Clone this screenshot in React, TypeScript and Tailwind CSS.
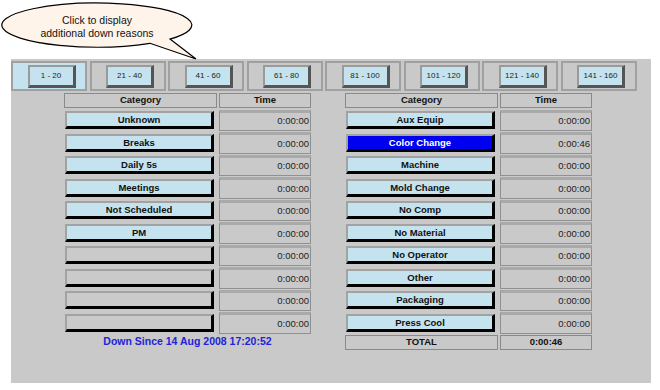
import React from "react";

const tabs = ["1 - 20", "21 - 40", "41 - 60", "61 - 80", "81 - 100", "101 - 120", "121 - 140", "141 - 160"];
const left = ["Unknown", "Breaks", "Daily 5s", "Meetings", "Not Scheduled", "PM", "", "", "", ""];
const right = ["Aux Equip", "Color Change", "Machine", "Mold Change", "No Comp", "No Material", "No Operator", "Other", "Packaging", "Press Cool"];

function Row({ label, time, selected }: { label: string; time: string; selected?: boolean }) {
  const bg = selected ? "bg-[#0000f0] text-white" : label ? "bg-[#c5e3ee] text-[#111]" : "bg-[#cacaca]";
  return (
    <div className="flex h-[22.5px] items-center gap-[2px]">
      <div className="w-[153px] flex items-center">
        <div
          className={`ml-[1px] w-[149px] h-[18px] flex items-center justify-center font-bold text-[9.5px] border-t-2 border-l-2 border-r-[3px] border-b-[3px] border-t-[#a2a2a2] border-l-[#a2a2a2] border-r-black border-b-black pt-[1px] ${bg}`}
        >
          {label}
        </div>
      </div>
      <div className="w-[92px] h-[21.5px] border border-[#909090] border-t-[3px] border-t-[#a9a9a9] bg-[#c9c9c9] flex items-center justify-end pr-[1px] text-[9.5px] text-[#222]">
        {time}
      </div>
    </div>
  );
}

function Header() {
  return (
    <div className="flex h-[15px] gap-[2px] mb-[1px]">
      <div className="w-[153px] border border-[#8a8a8a] bg-[#c9c9c9] flex items-center justify-center font-bold text-[9.5px] text-[#111]">Category</div>
      <div className="w-[92px] border border-[#8a8a8a] bg-[#c9c9c9] flex items-center justify-center font-bold text-[9.5px] text-[#111]">Time</div>
    </div>
  );
}

export default function App() {
  return (
    <div className="relative w-[660px] h-[390px] bg-white overflow-hidden" style={{ fontFamily: '"Liberation Sans", Arial, sans-serif' }}>
      <div className="ml-[11px] mt-[59px] w-[640px] h-[324px] bg-[#c9c9c9] flex flex-col">
        <div className="flex gap-[2.5px] pt-[2px] h-[32px]">
          {tabs.map((t, i) => (
            <div
              key={t}
              className={`w-[76px] h-[30px] border-2 border-[#a0a0a0] flex items-center justify-center pl-[5px] ${i === 0 ? "bg-[#c5e3ee]" : "bg-[#c9c9c9]"}`}
            >
              <div className="w-[48px] h-[23px] bg-[#c5e3ee] border-t-2 border-l-2 border-r-[3px] border-b-[3px] border-t-[#9a9a9a] border-l-[#9a9a9a] border-r-[#555] border-b-[#555] flex items-center justify-center text-[8px] text-[#222]">
                {t}
              </div>
            </div>
          ))}
        </div>
        <div className="flex mt-[2px] gap-[34px] pl-[53px]">
          <div className="flex flex-col w-[247px]">
            <Header />
            {left.map((l, i) => (
              <Row key={i} label={l} time="0:00:00" />
            ))}
            <div className="h-[16px] flex items-center justify-center font-bold text-[10.5px] text-[#2222d8]">
              Down Since 14 Aug 2008 17:20:52
            </div>
          </div>
          <div className="flex flex-col w-[247px]">
            <Header />
            {right.map((l, i) => (
              <Row key={i} label={l} time={l === "Color Change" ? "0:00:46" : "0:00:00"} selected={l === "Color Change"} />
            ))}
            <div className="flex h-[15px] gap-[2px] mt-[1px]">
              <div className="w-[153px] border border-[#8a8a8a] bg-[#c9c9c9] flex items-center justify-center font-bold text-[9.5px] text-[#111]">TOTAL</div>
              <div className="w-[92px] border border-[#8a8a8a] bg-[#c9c9c9] flex items-center justify-center font-bold text-[9.5px] text-[#111]">0:00:46</div>
            </div>
          </div>
        </div>
      </div>
      <div className="absolute left-0 top-0 w-[220px] h-[62px]">
        <svg width="220" height="62" viewBox="0 0 220 62" className="absolute left-0 top-0">
          <path d="M150,43.3 A95,22 0 1,1 170,39.1 L196,59 Z" fill="#fff4ea" stroke="#000" strokeWidth="1.2" />
        </svg>
        <div className="absolute left-0 top-0 w-[194px] pt-[13.5px] flex flex-col items-center text-[10.5px] leading-[13px] text-[#111]">
          <span>Click to display</span>
          <span>additional down reasons</span>
        </div>
      </div>
    </div>
  );
}
